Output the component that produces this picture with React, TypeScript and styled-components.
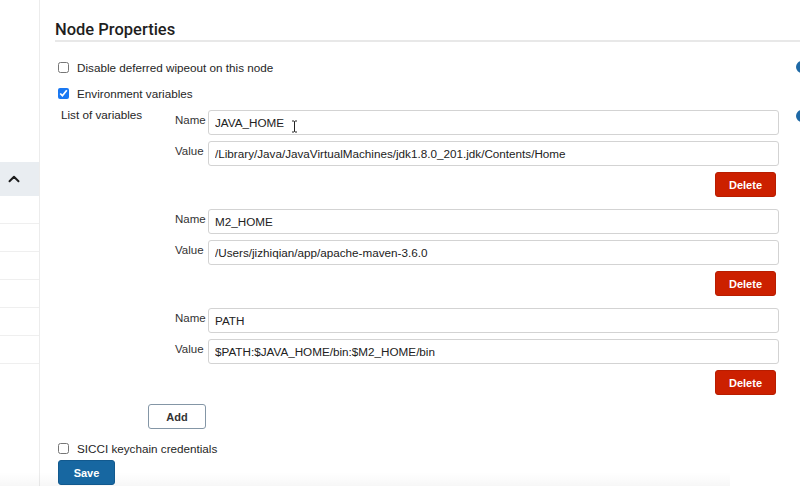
import { useState } from "react";
import styled, { createGlobalStyle } from "styled-components";
import { ChevronUp } from "lucide-react";

interface EnvVar {
  name: string;
  value: string;
}

const initialVars: EnvVar[] = [
  { name: "JAVA_HOME", value: "/Library/Java/JavaVirtualMachines/jdk1.8.0_201.jdk/Contents/Home" },
  { name: "M2_HOME", value: "/Users/jizhiqian/app/apache-maven-3.6.0" },
  { name: "PATH", value: "$PATH:$JAVA_HOME/bin:$M2_HOME/bin" },
];

const GlobalStyle = createGlobalStyle`
  html, body {
    margin: 0;
    padding: 0;
    background: #fff;
    overflow: hidden;
  }
  body {
    font-family: "Liberation Sans", Arial, sans-serif;
    font-size: 11.7px;
    color: #222;
  }
  * {
    box-sizing: border-box;
  }
`;

const Page = styled.div`
  display: flex;
  width: 800px;
  height: 486px;
  overflow: hidden;
  position: relative;
`;

const Sidebar = styled.aside`
  width: 40px;
  flex-shrink: 0;
  border-right: 1px solid #ececec;
  padding-top: 162px;
`;

const SideItem = styled.div<{ $active?: boolean }>`
  height: ${(p) => (p.$active ? "34px" : "28px")};
  display: flex;
  align-items: center;
  padding-left: 5px;
  background: ${(p) => (p.$active ? "#e9edf1" : "transparent")};
  border-bottom: ${(p) => (p.$active ? "none" : "1px solid #efefef")};
  color: #1d1d1d;
`;

const Main = styled.main`
  flex: 1;
  min-width: 0;
  margin-right: -16px;
  padding-left: 15px;
  position: relative;
`;

const SectionHeader = styled.h2`
  margin: 0;
  padding-top: 19px;
  font-family: Roboto, "Liberation Sans", sans-serif;
  font-size: 16.5px;
  font-weight: 500;
  line-height: 21px;
  color: #1f1f1f;
  border-bottom: 2px solid #e8e8e8;
`;

const SettingRow = styled.div<{ $mt: number }>`
  display: flex;
  align-items: flex-start;
  margin-top: ${(p) => p.$mt}px;
`;

const RowBody = styled.div`
  flex: 1;
  min-width: 0;
  padding-right: 5px;
`;

const HelpSlot = styled.div<{ $top: number }>`
  width: 20px;
  margin-left: 12px;
  flex-shrink: 0;
  padding-top: ${(p) => p.$top}px;
`;

const HelpDot = styled.span`
  display: block;
  width: 12px;
  height: 12px;
  border-radius: 50%;
  background: #1e69a6;
`;

const CheckRow = styled.label`
  display: flex;
  align-items: center;
  height: 20px;
  padding-left: 3px;
  gap: 8px;
  color: #262626;
`;

const Check = styled.input`
  width: 11px;
  height: 11px;
  margin: 0;
  accent-color: #1a78f2;
`;

const VarBlock = styled.div`
  display: flex;
  align-items: flex-start;
`;

const ListLabel = styled.div`
  width: 93px;
  flex-shrink: 0;
  padding-left: 6px;
  line-height: 20px;
  color: #262626;
`;

const Repeater = styled.div`
  flex: 1;
  min-width: 0;
  padding-top: 5px;
`;

const Items = styled.div`
  display: flex;
  flex-direction: column;
  gap: 12px;
`;

const Item = styled.div`
  display: flex;
  flex-direction: column;
  gap: 6px;
  padding-left: 27px;
`;

const Field = styled.div`
  display: flex;
  align-items: flex-start;
`;

const FieldLabel = styled.span`
  width: 33px;
  flex-shrink: 0;
  padding-top: 3px;
  line-height: 14px;
  font-size: 11.5px;
  color: #333;
`;

const InputWrap = styled.div`
  flex: 1;
  min-width: 0;
  position: relative;
`;

const TextInput = styled.input`
  display: block;
  width: 100%;
  height: 25px;
  margin: 0;
  padding: 0 6px;
  border: 1px solid #d3d3d3;
  border-radius: 3px;
  background: #fff;
  font-family: "Liberation Sans", Arial, sans-serif;
  font-size: 11.7px;
  color: #222;
  outline: none;
`;

const Cursor = styled.svg`
  position: absolute;
  left: 83px;
  top: 10px;
  pointer-events: none;
`;

const ButtonRow = styled.div<{ $justify: string }>`
  display: flex;
  justify-content: ${(p) => p.$justify};
`;

const Button = styled.button<{ $variant: "danger" | "primary" | "plain"; $w: number }>`
  width: ${(p) => p.$w}px;
  height: 25px;
  margin: 0;
  padding: 0;
  border-radius: 3px;
  font-family: "Liberation Sans", Arial, sans-serif;
  font-size: 11px;
  font-weight: bold;
  cursor: pointer;
  background: ${(p) => (p.$variant === "danger" ? "#cc2000" : p.$variant === "primary" ? "#1767a1" : "#fff")};
  color: ${(p) => (p.$variant === "plain" ? "#333" : "#fff")};
  border: 1px solid
    ${(p) => (p.$variant === "danger" ? "#b81d00" : p.$variant === "primary" ? "#12598e" : "#8496a6")};
`;

const DeleteButton = styled(Button)`
  margin-right: 3px;
`;

const AddRow = styled.div`
  margin-top: 9px;
`;

const FooterShade = styled.div`
  position: absolute;
  left: -40px;
  right: 86px;
  bottom: 0;
  height: 14px;
  background: linear-gradient(to bottom, rgba(0, 0, 0, 0), rgba(0, 0, 0, 0.03));
  pointer-events: none;
`;

const SaveRow = styled.div`
  margin-top: 2px;
  padding-left: 3px;
  position: relative;
  z-index: 1;
`;

export default function App() {
  const [vars, setVars] = useState<EnvVar[]>(initialVars);
  const [wipeout, setWipeout] = useState(false);
  const [envOn, setEnvOn] = useState(true);
  const [sicci, setSicci] = useState(false);

  const update = (i: number, key: keyof EnvVar, v: string) => {
    setVars(vars.map((item, idx) => (idx === i ? { ...item, [key]: v } : item)));
  };

  return (
    <Page>
      <GlobalStyle />
      <Sidebar>
        <SideItem $active>
          <ChevronUp size={18} strokeWidth={2.6} />
        </SideItem>
        <SideItem />
        <SideItem />
        <SideItem />
        <SideItem />
        <SideItem />
        <SideItem />
      </Sidebar>

      <Main>
        <SectionHeader>Node Properties</SectionHeader>

        <SettingRow $mt={15}>
          <RowBody>
            <CheckRow>
              <Check type="checkbox" checked={wipeout} onChange={() => setWipeout(!wipeout)} />
              Disable deferred wipeout on this node
            </CheckRow>
          </RowBody>
          <HelpSlot $top={4}>
            <HelpDot />
          </HelpSlot>
        </SettingRow>

        <SettingRow $mt={6}>
          <RowBody>
            <CheckRow>
              <Check type="checkbox" checked={envOn} onChange={() => setEnvOn(!envOn)} />
              Environment variables
            </CheckRow>
          </RowBody>
          <HelpSlot $top={0} />
        </SettingRow>

        <SettingRow $mt={2}>
          <RowBody>
            <VarBlock>
              <ListLabel>List of variables</ListLabel>
              <Repeater>
                <Items>
                  {vars.map((v, i) => (
                    <Item key={i}>
                      <Field>
                        <FieldLabel>Name</FieldLabel>
                        <InputWrap>
                          <TextInput value={v.name} onChange={(e) => update(i, "name", e.target.value)} />
                          {i === 0 && (
                            <Cursor width="7" height="13" viewBox="0 0 7 13">
                              <path d="M1 1h2l0.5 0.5L4 1h2M3.5 1.5v10M1 12h2l0.5-0.5L4 12h2" fill="none" stroke="#222" strokeWidth="1" />
                            </Cursor>
                          )}
                        </InputWrap>
                      </Field>
                      <Field>
                        <FieldLabel>Value</FieldLabel>
                        <InputWrap>
                          <TextInput value={v.value} onChange={(e) => update(i, "value", e.target.value)} />
                        </InputWrap>
                      </Field>
                      <ButtonRow $justify="flex-end">
                        <DeleteButton
                          $variant="danger"
                          $w={61}
                          onClick={() => setVars(vars.filter((_, idx) => idx !== i))}
                        >
                          Delete
                        </DeleteButton>
                      </ButtonRow>
                    </Item>
                  ))}
                </Items>
                <AddRow>
                  <Button $variant="plain" $w={58} onClick={() => setVars([...vars, { name: "", value: "" }])}>
                    Add
                  </Button>
                </AddRow>
              </Repeater>
            </VarBlock>
          </RowBody>
          <HelpSlot $top={5}>
            <HelpDot />
          </HelpSlot>
        </SettingRow>

        <SettingRow $mt={9}>
          <RowBody>
            <CheckRow>
              <Check type="checkbox" checked={sicci} onChange={() => setSicci(!sicci)} />
              SICCI keychain credentials
            </CheckRow>
          </RowBody>
          <HelpSlot $top={0} />
        </SettingRow>

        <SaveRow>
          <Button $variant="primary" $w={57}>
            Save
          </Button>
        </SaveRow>
        <FooterShade />
      </Main>
    </Page>
  );
}
